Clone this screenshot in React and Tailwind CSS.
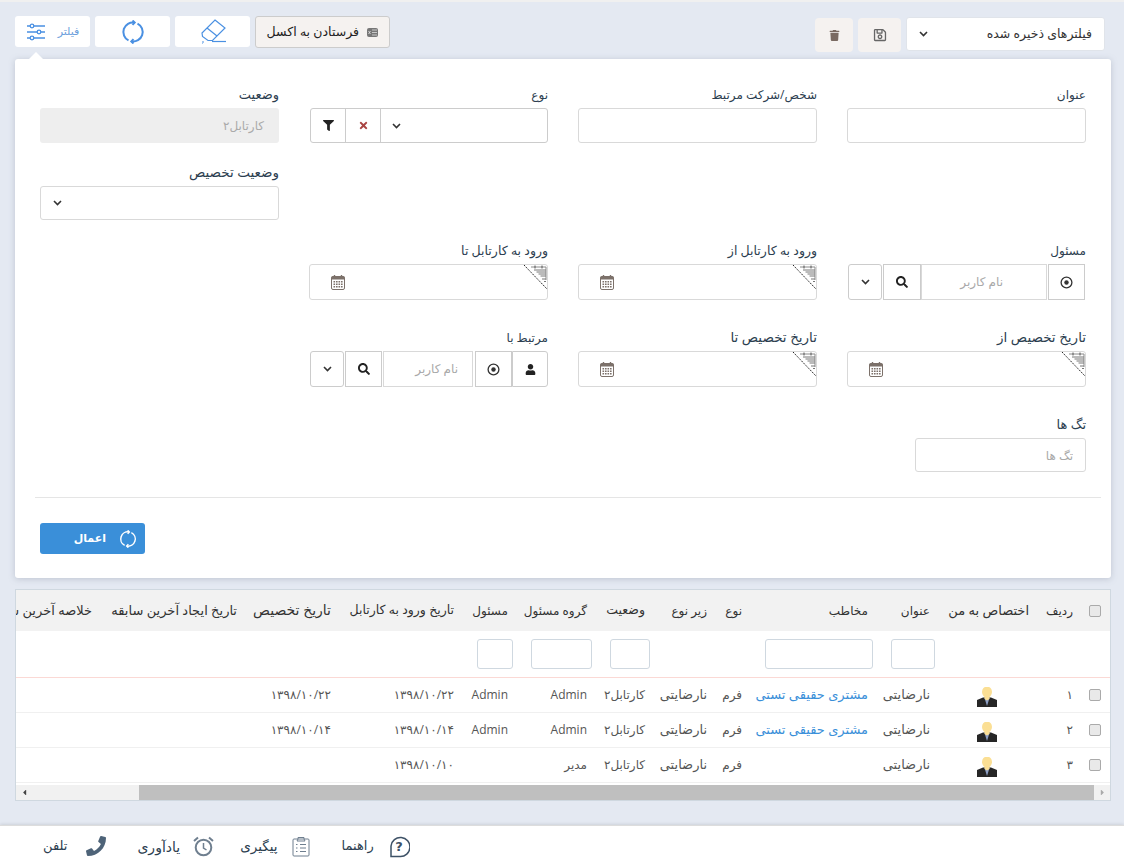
import React from "react";
import { FaFilter, FaTimes, FaSearch, FaUser, FaTrash, FaRegSave, FaPhone, FaCaretLeft, FaCaretRight } from "react-icons/fa";

const Chevron = ({ className = "" }) => (
  <svg width="9" height="6" viewBox="0 0 9 6" className={className}><path d="M1 1l3.5 3.5L8 1" fill="none" stroke="#333" strokeWidth="1.6" /></svg>
);
const Target = () => (
  <svg width="13" height="13" viewBox="0 0 13 13"><circle cx="6.5" cy="6.5" r="5.4" fill="none" stroke="#333" strokeWidth="1.3" /><circle cx="6.5" cy="6.5" r="2.2" fill="#333" /></svg>
);
const Calendar = () => (
  <svg width="14" height="15" viewBox="0 0 14 15">
    <rect x="0.5" y="1.5" width="13" height="13" rx="1.5" fill="#fff" stroke="#7c716a" />
    <rect x="0.5" y="1.5" width="13" height="3" fill="#7c716a" />
    <path d="M3.5 0v3M10.500 0v3" stroke="#7c716a" strokeWidth="1.4" />
    <g fill="#7c716a">
      {[2.5, 5, 7.5, 10].map((x) => [6, 8.500, 11].map((y) => <rect key={x + "-" + y} x={x} y={y} width="1.600" height="1.500" />))}
    </g>
  </svg>
);
const Corner = () => (
  <svg width="25" height="26" viewBox="0 0 25 26" className="absolute -top-px -right-px">
    <g stroke="#8a8a8a" strokeWidth="1" fill="none">
      <path d="M8 3h15v13" />
      <path d="M11 6h12M13.500 8h9.500M15.500 10h7.500M17.500 12h5.500" stroke="#777" />
      <path d="M12 1.500v3M19 1.500v3" stroke="#555" />
      <path d="M19 15h4M21 17.500h2" stroke="#777" />
    </g>
    <path d="M1 1L24 25" stroke="#222" strokeWidth="1" strokeDasharray="1.500 1" fill="none" />
  </svg>
);
const Sync = ({ size = 24, color = "#4a90e2" }) => (
  <svg width={size} height={size} viewBox="0 0 24 24" fill="none" stroke={color} strokeWidth="2">
    <path d="M13.500 2.600A9.500 9.500 0 0 0 7.500 20.400" />
    <path d="M10.500 21.400A9.500 9.500 0 0 0 16.500 3.600" />
    <path d="M11.500 0.500l2.200 2.100-2.200 2.300M12.500 23.500l-2.200-2.100 2.200-2.300" />
  </svg>
);
const Sliders = () => (
  <svg width="20" height="20" viewBox="0 0 20 20" fill="none" stroke="#4a90e2" strokeWidth="1.300">
    <path d="M1 4h18M1 10h18M1 16h18" />
    <circle cx="6" cy="4" r="1.800" fill="#fff" />
    <circle cx="13" cy="10" r="1.800" fill="#fff" />
    <circle cx="6" cy="16" r="1.800" fill="#fff" />
  </svg>
);
const Eraser = () => (
  <svg width="26" height="25" viewBox="0 0 26 25" fill="none" stroke="#4a90e2" strokeWidth="1.200">
    <path d="M15 1l10 8-12.500 12.500h-4.500L2.500 17.500 2 14z" />
    <path d="M7 9l10 8" />
    <path d="M12 22.500h14" />
    <path d="M2 23h2M2 25h1" />
  </svg>
);
const Person = () => (
  <svg width="20" height="20" viewBox="0 0 20 20">
    <path d="M0 20v-7l6-2.500h8l6 2.500v7z" fill="#262626" />
    <path d="M7.500 11h5L10 19z" fill="#8b9dc3" />
    <ellipse cx="10" cy="5" rx="5" ry="5.500" fill="#fbdf94" />
    <path d="M7.500 9h5v3l-2.500 1.500L7.500 12z" fill="#fbdf94" />
  </svg>
);
const Check = () => <span className="block w-3 h-3 rounded-[2px] border border-[#aaa] bg-[#e9e9e9]" />;

const inputCls = "w-full h-full bg-white border border-[#d9d9d9] rounded-[3px] px-3 text-xs outline-none placeholder:text-[#a9a9a9]";

const Field = ({ label, h, children, mb, className = "", labelCls = "text-[12.5px]" }) => (
  <div className={className}>
    <div className={"h-[21px] text-[#2c3e50] leading-[15px] whitespace-nowrap " + labelCls}>{label}</div>
    <div className={h + " " + mb}>{children}</div>
  </div>
);

const DateBox = () => (
  <div className="relative h-full bg-white border border-[#d9d9d9] rounded-[3px] flex items-center justify-end pl-[21px]">
    <Corner />
    <Calendar />
  </div>
);
const Cell = ({ className = "", children }) => (
  <div className={"h-full bg-white border border-[#ccc] flex items-center justify-center " + className}>{children}</div>
);

const UserPick = () => (
  <div className="flex h-full items-stretch pr-px">
    <Cell className="w-[37px]"><Target /></Cell>
    <div className="w-[126px] mr-px border border-[#d9d9d9] flex items-center text-xs text-[#a9a9a9] pr-[43px]">نام کاربر</div>
    <Cell className="w-[38px]"><FaSearch size={12} color="#222" /></Cell>
    <Cell className="w-[34px] mr-px h-[34px] rounded-[3px]"><Chevron /></Cell>
  </div>
);

const cols = [32, 44, 99, 62, 126, 35, 62, 58, 79, 54, 123, 94, 145, 130];
const heads = ["ردیف", "اختصاص به من", "عنوان", "مخاطب", "نوع", "زیر نوع", "وضعیت", "گروه مسئول", "مسئول", "تاریخ ورود به کارتابل", "تاریخ تخصیص", "تاریخ ایجاد آخرین سابقه", "خلاصه آخرین سابقه"];
const headSize = { 1: "text-[13px]", 6: "text-[12.5px]", 9: "text-[12.5px]", 10: "text-[14px]", 11: "text-[13px]", 12: "text-[13px]" };
const filters = { 2: 44, 3: 108, 6: 40, 7: 61, 8: 36 };
const rows = [
  ["۱", "نارضایتی", "مشتری حقیقی تستی", "فرم", "نارضایتی", "کارتابل۲", "Admin", "Admin", "۱۳۹۸/۱۰/۲۲", "۱۳۹۸/۱۰/۲۲"],
  ["۲", "نارضایتی", "مشتری حقیقی تستی", "فرم", "نارضایتی", "کارتابل۲", "Admin", "Admin", "۱۳۹۸/۱۰/۱۴", "۱۳۹۸/۱۰/۱۴"],
  ["۳", "نارضایتی", "", "فرم", "نارضایتی", "کارتابل۲", "مدیر", "", "۱۳۹۸/۱۰/۱۰", ""],
];

export default function App() {
  return (
    <div dir="rtl" className="h-[866px] overflow-hidden bg-[#e4e9f2] flex flex-col text-[#333]" style={{ fontFamily: '"Open Sans","DejaVu Sans",sans-serif' }}>
      <div className="h-[2px] bg-[#f0f0f0]" />
      <div className="h-[57px] flex justify-between pr-[19px] pl-[15px] pt-[14px] relative">
        <div className="flex items-start">
          <div className="w-[199px] h-[34px] mt-px bg-white rounded-[3px] border border-[#e0e4ea] flex items-center justify-between px-3 text-[12.5px] text-[#333]">
            <span>فیلترهای ذخیره شده</span><Chevron />
          </div>
          <div className="w-[43px] h-[34px] mt-[2px] mr-[5px] bg-[#f5f2f0] rounded-[4px] flex items-center justify-center"><FaRegSave size={14} color="#666" /></div>
          <div className="w-[38px] h-[34px] mt-[2px] mr-[5px] bg-[#f5f2f0] rounded-[4px] flex items-center justify-center"><FaTrash size={11} color="#7a6a62" /></div>
        </div>
        <div className="flex items-start gap-[5px]">
          <div className="w-[135px] h-[32px] bg-[#f5f2f0] border border-[#ccc] rounded-[3px] flex items-center pr-[11px] gap-2 text-[12.5px] text-[#222]">
            <svg width="11" height="11" viewBox="0 0 11 11" className="shrink-0"><rect x="0" y="1" width="11" height="9" rx="2" fill="#777" /><path d="M5 3h5M5 5.500h5M5 8h5M1.500 4l2 3M3.500 4l-2 3" stroke="#ddd" strokeWidth="0.800" /></svg>
            <span>فرستادن به اکسل</span>
          </div>
          <div className="w-[75px] h-[31px] bg-white rounded-[3px] flex items-center justify-center"><Eraser /></div>
          <div className="w-[75px] h-[31px] bg-white rounded-[3px] flex items-center justify-center"><Sync /></div>
          <div className="w-[75px] h-[31px] bg-white rounded-[3px] flex items-center justify-center gap-3 text-[11px] text-[#6d9fdc]">
            <span>فیلتر</span><Sliders />
          </div>
        </div>
        <div className="absolute left-[29px] bottom-0 w-0 h-0 border-l-[7px] border-r-[7px] border-b-[7px] border-l-transparent border-r-transparent border-b-white" />
      </div>

      <div className="ml-[15px] mr-[13px] h-[519px] bg-white rounded-[3px] shadow-[0_1px_6px_rgba(120,130,150,0.35)] pt-[28px] px-[25px]">
        <div className="grid grid-cols-4 gap-x-[30px]">
          <Field label="عنوان" h="h-[35px]" mb="mb-[22px]" labelCls="text-xs"><input className={inputCls} /></Field>
          <Field label="شخص/شرکت مرتبط" h="h-[35px]" mb="mb-[22px]" labelCls="text-xs"><input className={inputCls} /></Field>
          <Field label="نوع" h="h-[35px]" mb="mb-[22px]" labelCls="text-xs">
            <div className="flex h-full border border-[#ccc] rounded-[3px] ml-px">
              <div className="flex-1 flex items-center justify-end pl-[11px]"><Chevron /></div>
              <div className="w-[35px] border-r border-[#ccc] flex items-center justify-center"><FaTimes size={11} color="#a94442" /></div>
              <div className="w-[35px] border-r border-[#ccc] flex items-center justify-center"><FaFilter size={11} color="#222" /></div>
            </div>
          </Field>
          <Field label="وضعیت" h="h-[35px]" mb="mb-[22px]" labelCls="text-[13px]">
            <div className="h-full bg-[#eee] rounded-[3px] flex items-center px-[15px] text-xs text-[#aaa]">کارتابل۲</div>
          </Field>

          <div className="col-span-3" />
          <Field label="وضعیت تخصیص" h="h-[34px]" mb="mb-[23px]" labelCls="text-[13.500px]">
            <div className="h-full border border-[#d9d9d9] rounded-[3px] flex items-center justify-end pl-3"><Chevron /></div>
          </Field>

          <Field label="مسئول" h="h-[36px]" mb="mb-[30px]" labelCls="text-xs"><UserPick /></Field>
          <Field label="ورود به کارتابل از" h="h-[36px]" mb="mb-[30px]"><DateBox /></Field>
          <Field label="ورود به کارتابل تا" h="h-[36px]" mb="mb-[30px]"><DateBox /></Field>
          <div />

          <Field label="تاریخ تخصیص از" h="h-[36px]" mb="mb-[30px]" labelCls="text-[13.500px]"><DateBox /></Field>
          <Field label="تاریخ تخصیص تا" h="h-[36px]" mb="mb-[30px]" labelCls="text-[13.500px]"><DateBox /></Field>
          <Field label="مرتبط با" h="h-[36px]" mb="mb-[30px]" labelCls="text-xs">
            <div className="flex h-full items-stretch">
              <Cell className="w-[36px] rounded-r-[3px]"><FaUser size={11} color="#222" /></Cell>
              <Cell className="w-[37px]"><Target /></Cell>
              <div className="w-[90px] mr-[2px] border border-[#d9d9d9] flex items-center text-xs text-[#a9a9a9] pr-[14px]">نام کاربر</div>
              <Cell className="w-[37px] mr-px"><FaSearch size={12} color="#222" /></Cell>
              <Cell className="w-[34px] mr-px h-[34px] rounded-[3px]"><Chevron /></Cell>
            </div>
          </Field>
          <div />

          <Field label="تگ ها" h="h-[34px]" mb="mb-[25px]" className="col-span-4" labelCls="text-[13px]">
            <input className={inputCls + " !w-[171px]"} placeholder="تگ ها" />
          </Field>
        </div>
        <div className="-ml-[5px] -mr-[15px] border-t border-[#e5e5e5]" />
        <div className="mt-[25px] flex justify-end">
          <div className="w-[105px] h-[31px] bg-[#3a8fd9] rounded-[3px] flex items-center pr-[8px] gap-[13px] text-[11px] font-bold text-white">
            <Sync size={18} color="#fff" /><span>اعمال</span>
          </div>
        </div>
      </div>

      <div className="mt-[11px] ml-[15px] mr-[13px] h-[212px] border border-[#cfd8e0] bg-white flex flex-col overflow-hidden">
        <div className="flex-1 overflow-hidden">
          <table className="table-fixed border-collapse text-xs w-[1113px] text-right">
            <colgroup>{cols.map((w, i) => <col key={i} style={{ width: w }} />)}</colgroup>
            <tbody>
              <tr className="h-[41px] bg-[#f2f2f2] text-[#333]">
                <td className="pr-[9px]"><Check /></td>
                {heads.map((h, i) => <td key={h} className={"pr-[5px] whitespace-nowrap overflow-hidden " + (headSize[i] || "")}>{h}</td>)}
              </tr>
              <tr className="h-[46px] border-b border-[#fbd9d5]">
                <td />
                {heads.map((h, i) => (
                  <td key={h}>{filters[i] ? <input className="block h-[30px] bg-white border border-[#cfd8e0] rounded-[3px] outline-none" style={{ width: filters[i] }} /> : null}</td>
                ))}
              </tr>
              {rows.map((r, i) => (
                <tr key={i} className="h-[35px] border-b border-[#f0f0f0] text-[#555]">
                  <td className="pr-[9px]"><Check /></td>
                  <td className="pr-[5px]">{r[0]}</td>
                  <td><div className="flex justify-center pt-[5px] pl-[5px]"><Person /></div></td>
                  <td className="pr-[5px] whitespace-nowrap text-[13px]">{r[1]}</td>
                  <td className="pr-[5px] whitespace-nowrap text-[13px] text-[#3a8fd9]">{r[2]}</td>
                  <td className="pr-[5px]">{r[3]}</td>
                  <td className="pr-[5px] whitespace-nowrap text-[13px]">{r[4]}</td>
                  <td className="pr-[5px] whitespace-nowrap">{r[5]}</td>
                  <td className="pr-[5px]">{r[6]}</td>
                  <td className="pr-[5px]">{r[7]}</td>
                  <td className="pr-[5px] whitespace-nowrap">{r[8]}</td>
                  <td className="pr-[5px] whitespace-nowrap">{r[9]}</td>
                  <td /><td />
                </tr>
              ))}
            </tbody>
          </table>
        </div>
        <div className="h-[15px] bg-[#f1f1f1] flex items-stretch shrink-0">
          <div className="w-[16px] flex items-center justify-center"><FaCaretRight size={9} color="#aaa" /></div>
          <div className="w-[955px] bg-[#bfbfbf]" />
          <div className="flex-1" />
          <div className="w-[16px] flex items-center justify-center"><FaCaretLeft size={9} color="#444" /></div>
        </div>
      </div>

      <div className="flex-1 mt-[24px] bg-white border-t border-[#ddd] shadow-[0_-1px_3px_rgba(0,0,0,0.1)] flex justify-end items-center pl-[43px] text-[13px] text-[#2c3e50]">
        <div className="flex items-center">
          <svg width="22" height="23" viewBox="0 0 22 23" fill="none" stroke="#3d5166" strokeWidth="1.500"><path d="M3 21.500V11a9.500 9.500 0 1 1 9 10.500z" /><text x="11" y="16" textAnchor="middle" fontSize="13" fontWeight="700" fill="#3d5166" stroke="none" fontFamily="DejaVu Sans">?</text></svg>
          <span className="mr-[14px] ml-[32px]">راهنما</span>
          <svg width="18" height="21" viewBox="0 0 18 21" fill="none" stroke="#6f7f8f" strokeWidth="1"><rect x="1" y="3" width="16" height="17" rx="1" /><path d="M6 3V1.500h6V3l1 2H5z" /><path d="M4 8.500h1.500M8 8.500h6M4 12h1.500M8 12h6M4 15.500h1.500M8 15.500h6" /></svg>
          <span className="mr-[14px] ml-[26px] text-[13.5px]">پیگیری</span>
          <svg width="21" height="21" viewBox="0 0 21 21" fill="none" stroke="#6f7f8f" strokeWidth="2"><circle cx="10.500" cy="11.500" r="7.800" /><path d="M10.500 7v5l3 2" strokeWidth="1.500" /><path d="M1 5l4-3.500M20 5l-4-3.500" /></svg>
          <span className="mr-[13px] ml-[31px] text-[14px]">یادآوری</span>
          <FaPhone size={20} color="#4e6378" />
          <span className="mr-[19px]">تلفن</span>
        </div>
      </div>
    </div>
  );
}
